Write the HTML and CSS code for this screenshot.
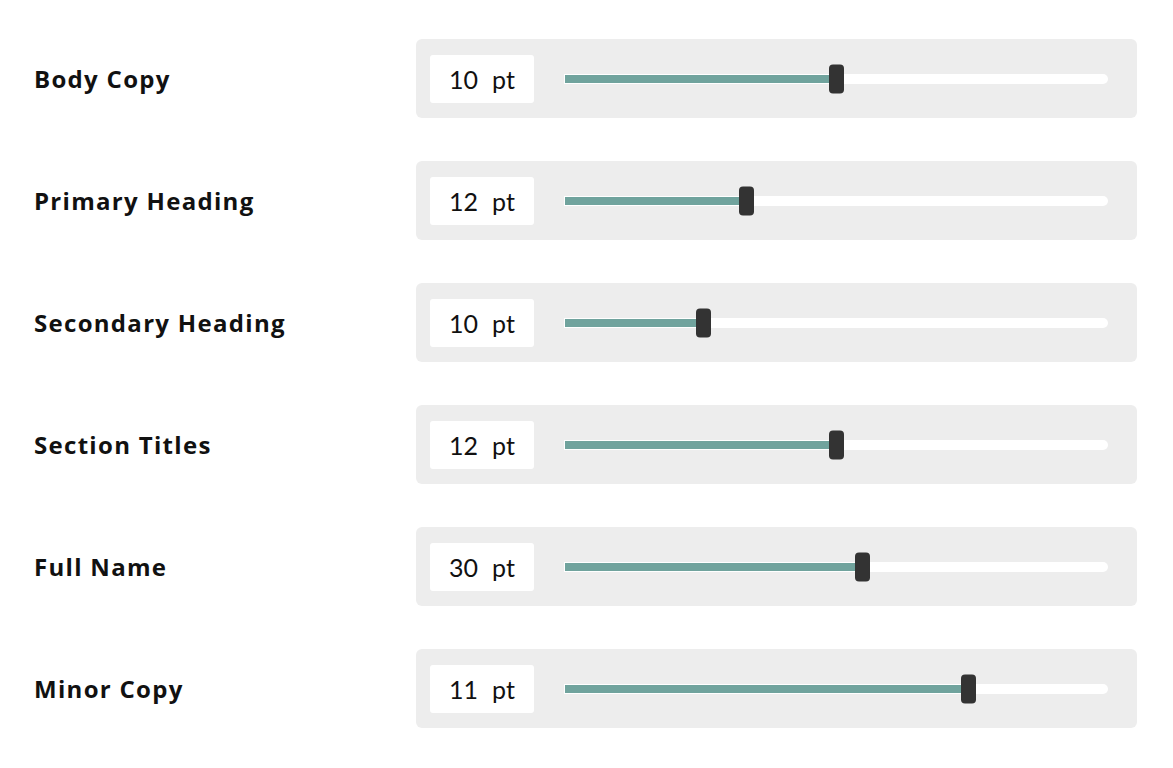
FILE: index.html
```html
<!DOCTYPE html>
<html lang="en">
<head>
    <meta charset="UTF-8">
    <meta name="viewport" content="width=device-width, initial-scale=1.0">
    <title>Font Sizes</title>
    <link rel="stylesheet" href="styles.css">
</head>
<body>
    <div id="sizes">
        <div class="size-row">
            <label class="size-label">Body Copy</label>
            <div class="size-panel">
                <div class="size-value"><span class="num">10</span><span class="unit">pt</span></div>
                <div class="slider">
                    <div class="slider-fill" style="width: 50%"></div>
                    <div class="slider-thumb" style="left: 50%"></div>
                </div>
            </div>
        </div>
        <div class="size-row">
            <label class="size-label">Primary Heading</label>
            <div class="size-panel">
                <div class="size-value"><span class="num">12</span><span class="unit">pt</span></div>
                <div class="slider">
                    <div class="slider-fill" style="width: 33.5%"></div>
                    <div class="slider-thumb" style="left: 33.5%"></div>
                </div>
            </div>
        </div>
        <div class="size-row">
            <label class="size-label">Secondary Heading</label>
            <div class="size-panel">
                <div class="size-value"><span class="num">10</span><span class="unit">pt</span></div>
                <div class="slider">
                    <div class="slider-fill" style="width: 25.5%"></div>
                    <div class="slider-thumb" style="left: 25.5%"></div>
                </div>
            </div>
        </div>
        <div class="size-row">
            <label class="size-label">Section Titles</label>
            <div class="size-panel">
                <div class="size-value"><span class="num">12</span><span class="unit">pt</span></div>
                <div class="slider">
                    <div class="slider-fill" style="width: 50%"></div>
                    <div class="slider-thumb" style="left: 50%"></div>
                </div>
            </div>
        </div>
        <div class="size-row">
            <label class="size-label">Full Name</label>
            <div class="size-panel">
                <div class="size-value"><span class="num">30</span><span class="unit">pt</span></div>
                <div class="slider">
                    <div class="slider-fill" style="width: 54.8%"></div>
                    <div class="slider-thumb" style="left: 54.8%"></div>
                </div>
            </div>
        </div>
        <div class="size-row">
            <label class="size-label">Minor Copy</label>
            <div class="size-panel">
                <div class="size-value"><span class="num">11</span><span class="unit">pt</span></div>
                <div class="slider">
                    <div class="slider-fill" style="width: 74.3%"></div>
                    <div class="slider-thumb" style="left: 74.3%"></div>
                </div>
            </div>
        </div>
    </div>
</body>
</html>
```

FILE: styles.css
```css
body {
    font-family: 'Open Sans', sans-serif;
    margin: 0;
    background-color: #fff;
    color: #111;
}
#sizes {
    display: flex;
    flex-direction: column;
    gap: 43px;
    padding: 39px 0 0 34px;
}
.size-row {
    display: grid;
    grid-template-columns: 382px 721px;
    align-items: center;
}
.size-label {
    font-size: 24px;
    font-weight: 700;
    letter-spacing: 1.3px;
    color: #111;
}
.size-panel {
    display: flex;
    align-items: center;
    height: 79px;
    padding: 0 29px 0 14px;
    box-sizing: border-box;
    background-color: #ededed;
    border-radius: 6px;
}
.size-value {
    display: flex;
    justify-content: center;
    align-items: center;
    width: 104px;
    height: 48px;
    background-color: #fff;
    border-radius: 3px;
    font-family: 'Lato', sans-serif;
    font-size: 25px;
    color: #111;
}
.size-value .unit {
    margin-left: 14px;
}
.slider {
    position: relative;
    flex: 1;
    height: 10px;
    margin-left: 30px;
    background-color: #fff;
    border-radius: 0 5px 5px 0;
}
.slider-fill {
    position: absolute;
    left: 1px;
    top: 1px;
    height: 8px;
    background-color: #70a39d;
}
.slider-thumb {
    position: absolute;
    top: 50%;
    width: 15px;
    height: 29px;
    margin-left: -7px;
    transform: translateY(-50%);
    background-color: #333;
    border-radius: 4px;
}
```
